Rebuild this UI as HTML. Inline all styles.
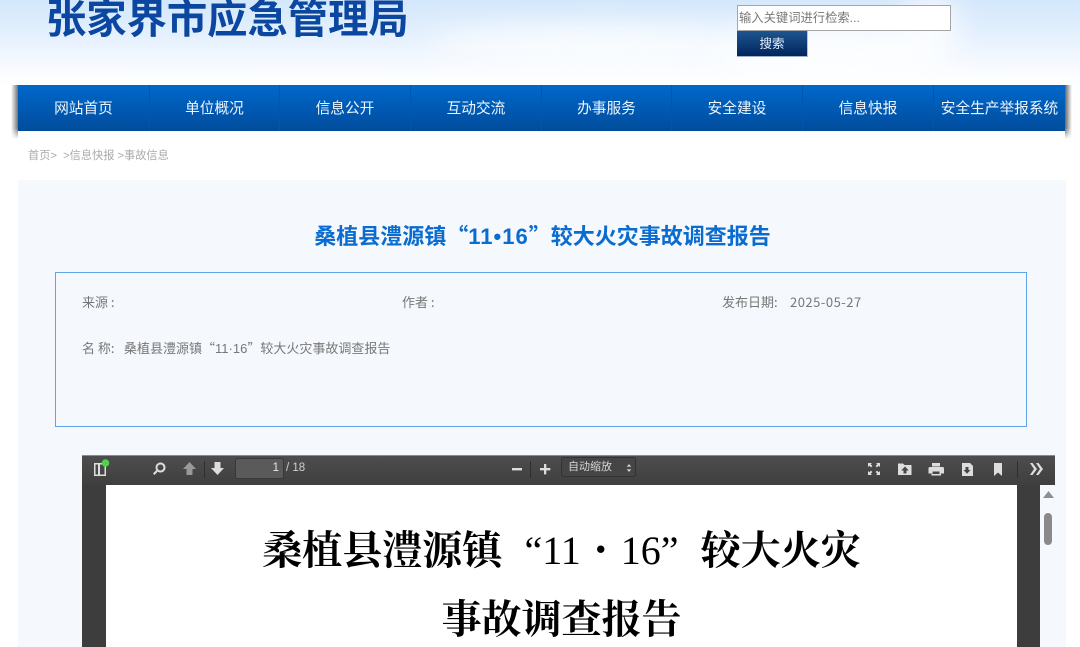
<!DOCTYPE html>
<html lang="zh"><head><meta charset="utf-8"><style>
*{box-sizing:border-box;margin:0;padding:0}
html,body{width:1080px;height:647px;overflow:hidden;background:#fff}
body{position:relative;font-family:"Liberation Sans","Noto Sans CJK SC",sans-serif}
.a{position:absolute;white-space:nowrap}
#hd{left:0;top:0;width:1080px;height:86px;background:linear-gradient(#d3e7fb,#e4f0fd 40%,#f8fbff 80%,#fff)}
#cl{left:0;top:0;width:1080px;height:86px}
#logo{left:46px;top:-6px;font-size:40.3px;line-height:52px;font-weight:700;color:#0b46a0}
#inp{left:737px;top:5px;width:214px;height:26px;background:#fff;border:1px solid #a5a5a5;font-size:12.3px;line-height:24px;color:#777;padding-left:1px}
#btn{left:737px;top:31px;width:71px;height:26px;background:linear-gradient(#1e568f,#02245c);color:#e8f0fa;font-size:12.5px;line-height:26px;text-align:center;border-bottom:1px solid #9fb2cc;border-right:1px solid #b6c4d8}
#nav{left:18px;top:85px;width:1047px;height:46px;background:linear-gradient(#0068cb,#004c9c)}
.sh{top:85px;height:54px;width:7px;-webkit-mask-image:linear-gradient(#000 80%,transparent);mask-image:linear-gradient(#000 80%,transparent)}
.n{position:absolute;top:0;height:46px;line-height:48px;font-size:14.7px;color:#eef5fd;text-align:center;border-left:1px solid #0057ad}
#crumb{left:28px;top:149px;font-size:11.2px;line-height:14px;color:#aaa}
#main{left:18px;top:180px;width:1048px;height:467px;background:#f5f8fd}
#title{left:0;top:219px;width:1085px;text-align:center;font-family:"Noto Sans CJK SC",sans-serif;font-size:22px;line-height:32px;font-weight:700;color:#0a6cce}
#title b{font-family:"Liberation Sans",sans-serif;letter-spacing:1px}
#box{left:55px;top:272px;width:972px;height:155px;border:1px solid #5fa3e8}
.t{font-family:"Noto Sans CJK SC",sans-serif;font-size:13px;line-height:18px;color:#777}
.t em{font-style:normal;font-family:"Liberation Sans",sans-serif}
#tb{left:82px;top:455px;width:973px;height:30px;background:linear-gradient(#4d4d4d,#3f3f3f);border-top:1px solid #8a8a8a}
#sl{left:82px;top:485px;width:24px;height:162px;background:#3d3d3d}
#pg{left:106px;top:485px;width:911px;height:162px;background:#fff}
#sr{left:1017px;top:485px;width:23px;height:162px;background:#3d3d3d}
#sb{left:1040px;top:485px;width:15px;height:162px;background:#f5f8fd}
.pt{position:absolute;left:0;width:911px;text-align:center;font-family:"Noto Serif CJK SC",serif;font-weight:700;color:#000;font-size:40px;line-height:56px}
.pt i{font-style:normal;font-weight:400}
.pt u{text-decoration:none;font-family:"Liberation Serif",serif;font-weight:400}
.pt s{text-decoration:none;display:inline-block;width:40px;font-family:"Liberation Serif",serif;font-weight:400}
</style></head><body>
<div class="a" id="hd"></div>
<svg class="a" id="cl" viewBox="0 0 1080 86"><defs><filter id="b" x="-50%" y="-100%" width="200%" height="300%"><feGaussianBlur stdDeviation="14"/></filter></defs><g fill="#fff" filter="url(#b)" opacity=".8"><ellipse cx="600" cy="45" rx="170" ry="18"/><ellipse cx="830" cy="50" rx="130" ry="30"/><ellipse cx="930" cy="20" rx="28" ry="24"/></g></svg>
<div class="a" id="logo">张家界市应急管理局</div>
<div class="a" id="inp">输入关键词进行检索...</div>
<div class="a" id="btn">搜索</div>
<div class="a sh" style="left:11px;background:linear-gradient(90deg,rgba(0,0,0,0),rgba(0,0,0,.55))"></div>
<div class="a sh" style="left:1065px;background:linear-gradient(90deg,rgba(0,0,0,.6),rgba(0,0,0,0))"></div>
<div class="a" id="nav">
<div class="n" style="left:0;width:131px;border-left:0">网站首页</div>
<div class="n" style="left:131px;width:130px">单位概况</div>
<div class="n" style="left:261px;width:131px">信息公开</div>
<div class="n" style="left:392px;width:131px">互动交流</div>
<div class="n" style="left:523px;width:130px">办事服务</div>
<div class="n" style="left:653px;width:131px">安全建设</div>
<div class="n" style="left:784px;width:131px">信息快报</div>
<div class="n" style="left:915px;width:132px">安全生产举报系统</div>
</div>
<div class="a" id="crumb">首页&gt;&nbsp; &gt;信息快报 &gt;事故信息</div>
<div class="a" id="main"></div>
<div class="a" id="title">桑植县澧源镇“<b>11•16</b>”较大火灾事故调查报告</div>
<div class="a" id="box"></div>
<div class="a t" style="left:82px;top:293px">来源 :</div>
<div class="a t" style="left:402px;top:293px">作者 :</div>
<div class="a t" style="left:722px;top:293px">发布日期:<span style="position:absolute;left:68px;letter-spacing:.5px">2025-05-27</span></div>
<div class="a t" style="left:82px;top:339px">名 称:<span style="position:absolute;left:42px">桑植县澧源镇“<em>11·16</em>”较大火灾事故调查报告</span></div>
<div class="a" id="tb"></div>
<div class="a" id="sl"></div><div class="a" id="pg">
<div class="pt" style="top:35px">桑植县澧源镇<s style="text-align:right">“</s><u>11</u><i>・</i><u>16</u><s style="text-align:left">”</s>较大火灾</div>
<div class="pt" style="top:104px">事故调查报告</div>
</div>
<div class="a" id="sr"></div><div class="a" id="sb"></div>
<svg class="a" style="left:82px;top:455px" width="973" height="192" viewBox="82 455 973 192">
<defs><filter id="s" x="-5%" y="-5%" width="110%" height="110%"><feGaussianBlur stdDeviation=".35"/></filter></defs>
<g fill="#ddd" filter="url(#s)">
<path d="M94 463h12v13H94zM95.500 464.500v10h2.500v-10zM100 464.500v10h4.500v-10z" fill-rule="evenodd"/>
<path d="M160.500 462.500a5 5 0 1 0 .1 0zM160.500 464.500a3 3 0 1 1-.1 0z" fill-rule="evenodd"/>
<path d="M153 473.500l3.200-3.400 1.500 1.500-3.200 3.400z"/>
<path d="M189.500 462l6.500 7h-3.500v6h-6v-6H183z" opacity=".55"/>
<path d="M214.500 462h6v6h3.500l-6.500 7-6.500-7h3.500z"/>
<rect x="512" y="468" width="10" height="2.400"/>
<path d="M544 464h2.300v4h4v2.400h-4v4H544v-4h-4V468h4z"/>
<path d="M868 463h4l-1.300 1.300 1.700 1.700-1.400 1.400-1.700-1.700-1.300 1.300zM880 463v4l-1.300-1.300-1.700 1.700-1.400-1.400 1.700-1.700-1.300-1.300zM868 475v-4l1.300 1.300 1.700-1.700 1.400 1.400-1.700 1.700 1.300 1.300zM880 475h-4l1.300-1.300-1.700-1.700 1.400-1.400 1.700 1.700 1.300-1.300z"/>
<path d="M898 463.500h5l1.500 1.500h7v10h-13.500zM905 466.500l-3.800 4h2.300v3h3v-3h2.300z" fill-rule="evenodd"/>
<path d="M932 463h8v3.500h-8zM929.500 467h13a1.500 1.500 0 0 1 1.500 1.500v5h-3v2h-9.500v-2h-3v-5a1.500 1.500 0 0 1 1-1.500zM932.500 471.500v2.500h7v-2.500z" fill-rule="evenodd"/>
<path d="M962 463h8l3 3v10h-11zM965.500 467v3h-2l3.500 3.800 3.500-3.800h-2v-3z" fill-rule="evenodd"/>
<path d="M994 463h8v13l-4-3.500-4 3.500z"/>
<path d="M1030 463h2.500l4.500 6-4.500 6H1030l4-6zM1036 463h2.500l4.500 6-4.500 6H1036l4-6z"/>
</g>
<circle cx="105.500" cy="463" r="3.800" fill="#4fd34a"/>
<g fill="#2f2f2f"><rect x="204" y="461" width="1" height="17"/><rect x="530" y="461" width="1" height="17"/><rect x="1017" y="461" width="1" height="17"/></g>
<rect x="235.500" y="458.500" width="48" height="20" rx="2" fill="#5a5a5a" stroke="#383838"/>
<rect x="561.500" y="457.500" width="74" height="19" rx="2" fill="#454545" stroke="#333"/>
<path d="M629 464l2.300 2.700h-4.600zM629 472l2.300-2.700h-4.600z" fill="#ccc"/>
<path d="M1043 498l5.500-7 5.500 7z" fill="#8f8f8f"/>
<rect x="1044" y="513" width="8" height="32" rx="4" fill="#8a8a8a"/>
</svg>
<div class="a" style="left:236px;top:460px;width:43px;text-align:right;font-size:11.5px;line-height:16px;color:#e8e8e8">1</div>
<div class="a" style="left:286px;top:460px;font-size:11.5px;line-height:16px;color:#cfcfcf">/ 18</div>
<div class="a" style="left:568px;top:459px;font-size:11px;line-height:16px;color:#d8d8d8">自动缩放</div>
</body></html>
